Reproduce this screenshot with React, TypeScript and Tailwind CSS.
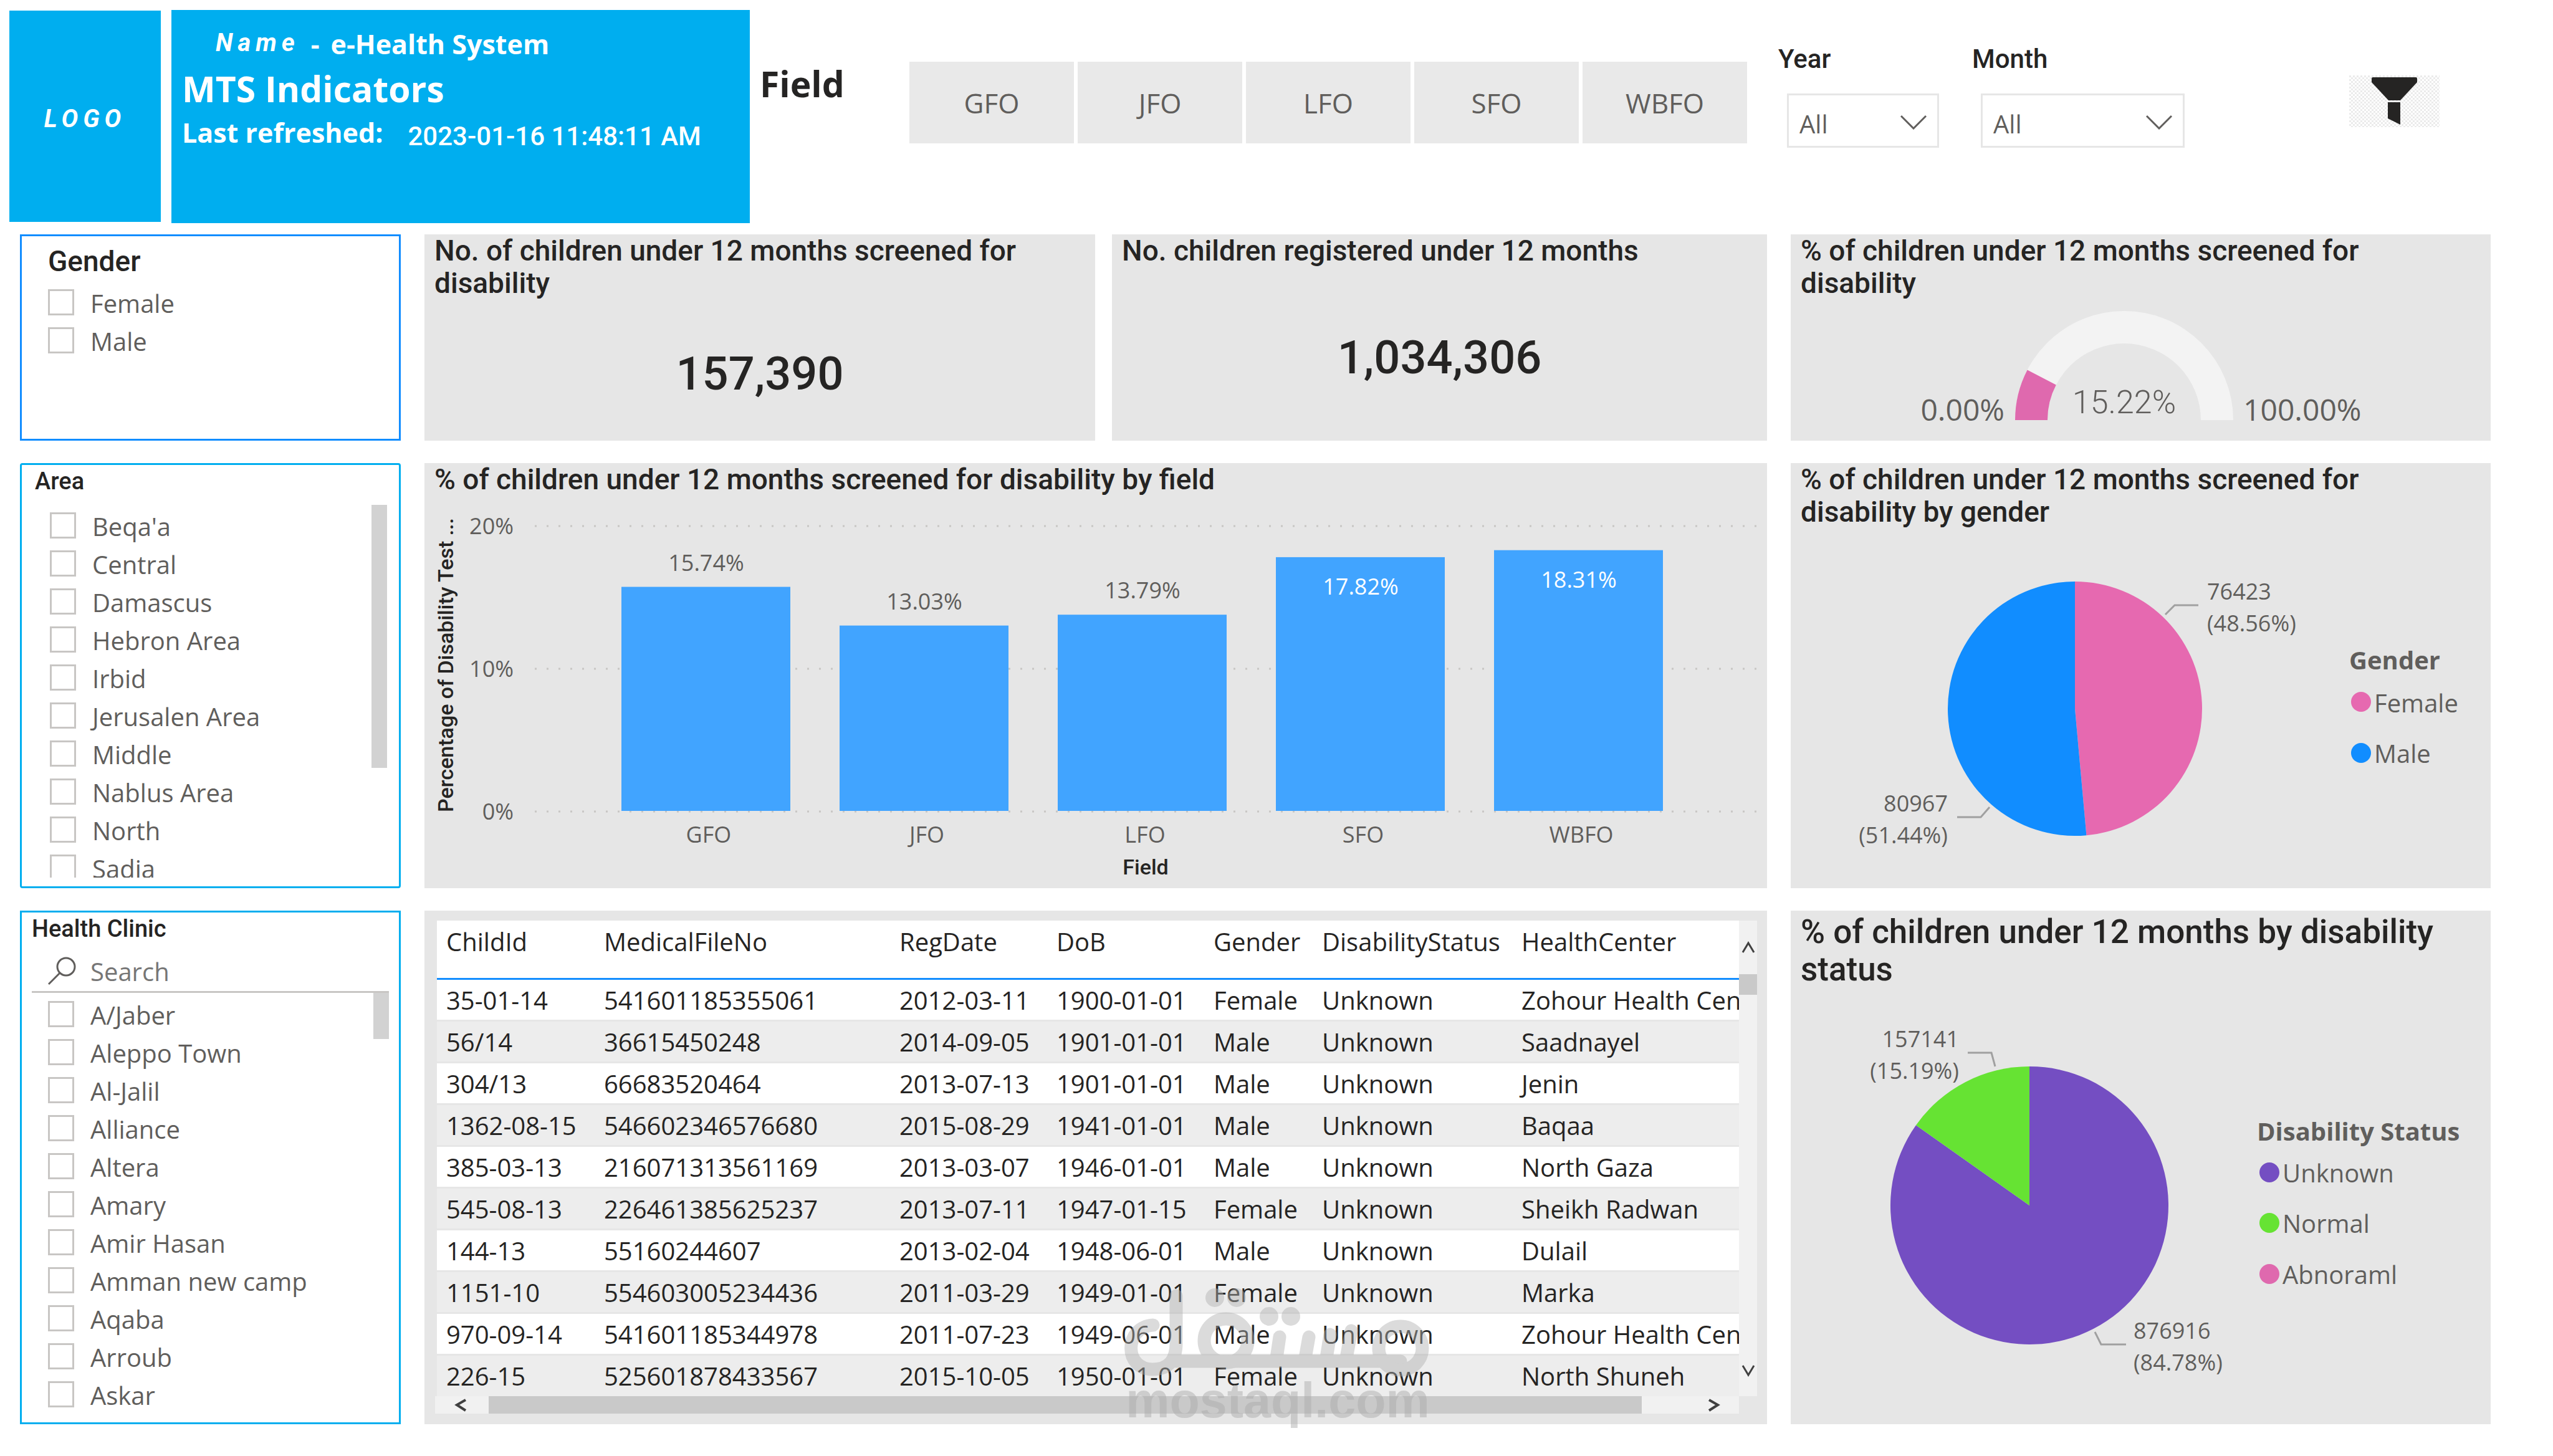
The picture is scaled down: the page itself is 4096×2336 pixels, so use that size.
import { useState } from "react";
import clsx from "clsx";

const fields = ["GFO", "JFO", "LFO", "SFO", "WBFO"];

const genders = ["Female", "Male"];

const areas = [
  "Beqa'a",
  "Central",
  "Damascus",
  "Hebron Area",
  "Irbid",
  "Jerusalen Area",
  "Middle",
  "Nablus Area",
  "North",
  "Sadia",
];

const clinics = [
  "A/Jaber",
  "Aleppo Town",
  "Al-Jalil",
  "Alliance",
  "Altera",
  "Amary",
  "Amir Hasan",
  "Amman new camp",
  "Aqaba",
  "Arroub",
  "Askar",
];

const columns = [
  { name: "ChildId", width: "w-[253px]" },
  { name: "MedicalFileNo", width: "w-[474px]" },
  { name: "RegDate", width: "w-[252px]" },
  { name: "DoB", width: "w-[252px]" },
  { name: "Gender", width: "w-[174px]" },
  { name: "DisabilityStatus", width: "w-[320px]" },
  { name: "HealthCenter", width: "" },
];

const rows = [
  ["35-01-14", "541601185355061", "2012-03-11", "1900-01-01", "Female", "Unknown", "Zohour Health Center"],
  ["56/14", "36615450248", "2014-09-05", "1901-01-01", "Male", "Unknown", "Saadnayel"],
  ["304/13", "66683520464", "2013-07-13", "1901-01-01", "Male", "Unknown", "Jenin"],
  ["1362-08-15", "546602346576680", "2015-08-29", "1941-01-01", "Male", "Unknown", "Baqaa"],
  ["385-03-13", "216071313561169", "2013-03-07", "1946-01-01", "Male", "Unknown", "North Gaza"],
  ["545-08-13", "226461385625237", "2013-07-11", "1947-01-15", "Female", "Unknown", "Sheikh Radwan"],
  ["144-13", "55160244607", "2013-02-04", "1948-06-01", "Male", "Unknown", "Dulail"],
  ["1151-10", "554603005234436", "2011-03-29", "1949-01-01", "Female", "Unknown", "Marka"],
  ["970-09-14", "541601185344978", "2011-07-23", "1949-06-01", "Male", "Unknown", "Zohour Health Center"],
  ["226-15", "525601878433567", "2015-10-05", "1950-01-01", "Female", "Unknown", "North Shuneh"],
];

const bars = [
  { field: "GFO", value: 15.74 },
  { field: "JFO", value: 13.03 },
  { field: "LFO", value: 13.79 },
  { field: "SFO", value: 17.82 },
  { field: "WBFO", value: 18.31 },
];

// Point on a circle, share 0 = twelve o'clock, clockwise
function polar(cx: number, cy: number, r: number, share: number) {
  const a = share * Math.PI * 2 - Math.PI / 2;
  return [cx + r * Math.cos(a), cy + r * Math.sin(a)];
}

function slice(cx: number, cy: number, r: number, from: number, to: number) {
  const [x1, y1] = polar(cx, cy, r, from);
  const [x2, y2] = polar(cx, cy, r, to);
  const large = to - from > 0.5 ? 1 : 0;
  return `M${cx} ${cy} L${x1} ${y1} A${r} ${r} 0 ${large} 1 ${x2} ${y2} Z`;
}

// Half ring opening downwards, share 0 = left end, 1 = right end
function ring(cx: number, cy: number, outer: number, inner: number, share: number) {
  const [x1, y1] = polar(cx, cy, outer, share / 2 - 0.25);
  const [x2, y2] = polar(cx, cy, inner, share / 2 - 0.25);
  return `M${cx - outer} ${cy} A${outer} ${outer} 0 0 1 ${x1} ${y1} L${x2} ${y2} A${inner} ${inner} 0 0 0 ${cx - inner} ${cy} Z`;
}

function CheckRow({ label, group }: { label: string; group: string }) {
  const id = `${group}-${label.replace(/\W+/g, "-")}`;
  return (
    <li className="flex h-[61px] shrink-0 items-center gap-[26px]">
      <input
        id={id}
        type="checkbox"
        className="h-[42px] w-[42px] shrink-0 appearance-none border-[3px] border-[#c8c6c4] bg-white checked:bg-[#605e5c]"
      />
      <label htmlFor={id} className="pt-1 text-[40px] leading-[52px] whitespace-nowrap text-[#605e5c]">
        {label}
      </label>
    </li>
  );
}

function Dropdown({ label, boxClass }: { label: string; boxClass: string }) {
  const id = label.toLowerCase();
  return (
    <div className="shrink-0 pt-[69px]">
      <label htmlFor={id} className="block font-['Roboto',sans-serif] text-[42px] leading-[52px] font-medium text-[#252423]">
        {label}
      </label>
      <div className={clsx("relative mt-[29px] ml-[14px] h-[87px]", boxClass)}>
        <select
          id={id}
          className="h-full w-full appearance-none border-[3px] border-[#e6e6e6] bg-white pt-2.5 pl-[17px] text-[40px] text-[#605e5c]"
        >
          <option>All</option>
        </select>
        <svg viewBox="0 0 42 24" className="pointer-events-none absolute top-[34px] right-[20px] h-[24px] w-[42px]">
          <path d="M1 2 L21 22 L41 2" fill="none" stroke="#605e5c" strokeWidth="3" />
        </svg>
      </div>
    </div>
  );
}

function CardTitle({ children }: { children: React.ReactNode }) {
  return (
    <h2 className="px-[16px] font-['Roboto',sans-serif] text-[46px] leading-[52px] font-medium text-[#252423]">
      {children}
    </h2>
  );
}

function Kpi({ title, value, className }: { title: React.ReactNode; value: string; className: string }) {
  return (
    <section className={clsx("flex min-w-0 flex-col bg-[#e6e6e6]", className)}>
      <CardTitle>{title}</CardTitle>
      <p className="flex flex-1 items-center justify-center pt-3 font-['Roboto',sans-serif] text-[74px] leading-[84px] font-medium text-[#252423]">
        {value}
      </p>
    </section>
  );
}

function Gauge() {
  return (
    <svg viewBox="0 0 1123 227" className="min-h-0 w-full flex-1">
      <path d={ring(535, 194, 175, 123, 1)} fill="#f3f3f3" />
      <path d={ring(535, 194, 175, 123, 0.1522)} fill="#df69ae" />
      <g fill="#605e5c">
        <text x="343" y="195" textAnchor="end" className="text-[48px]">0.00%</text>
        <text x="726" y="195" className="text-[48px]">100.00%</text>
        <text x="535" y="183" textAnchor="middle" className="font-['Roboto',sans-serif] text-[52px] font-light">
          15.22%
        </text>
      </g>
    </svg>
  );
}

function BarChart() {
  const base = 507;
  const perPoint = 22.9;
  return (
    <svg viewBox="0 0 2154 630" className="min-h-0 w-full flex-1 text-[36px]">
      {[0, 10, 20].map((tick) => (
        <g key={tick}>
          <line
            x1="177"
            x2="2140"
            y1={base - tick * perPoint}
            y2={base - tick * perPoint}
            stroke="#c8c6c4"
            strokeWidth="3"
            strokeDasharray="3 16"
          />
          <text x="143" y={base - tick * perPoint + 13} textAnchor="end" fill="#605e5c">
            {tick}%
          </text>
        </g>
      ))}
      {bars.map((bar, i) => {
        const x = 316 + i * 350;
        const top = base - bar.value * perPoint;
        const inside = bar.value > 15.8;
        return (
          <g key={bar.field}>
            <rect x={x} y={top} width="271" height={base - top - 1} fill="#41a4ff" />
            <text
              x={x + 136}
              y={inside ? top + 60 : top - 26}
              textAnchor="middle"
              fill={inside ? "#ffffff" : "#605e5c"}
            >
              {bar.value.toFixed(2)}%
            </text>
            <text x={x + 140} y="557" textAnchor="middle" fill="#605e5c">
              {bar.field}
            </text>
          </g>
        );
      })}
      <g fill="#252423" className="font-['Roboto',sans-serif] text-[34px] font-medium">
        <text x="1157" y="608" textAnchor="middle">Field</text>
        <text transform="translate(46 508) rotate(-90)">Percentage of Disability Test ...</text>
      </g>
    </svg>
  );
}

function GenderPie() {
  return (
    <svg viewBox="0 0 1123 578" className="min-h-0 w-full flex-1">
      <path d={slice(456, 290, 204, 0, 0.4856)} fill="#e669b0" />
      <path d={slice(456, 290, 204, 0.4856, 1)} fill="#118dff" />
      <g fill="none" stroke="#a0a0a0" strokeWidth="3">
        <path d="M601 139 L616 124 H654" />
        <path d="M319 448 L305 464 H267" />
      </g>
      <g fill="#605e5c" className="text-[36px]">
        <text x="668" y="115">76423</text>
        <text x="668" y="166">(48.56%)</text>
        <text x="252" y="455" textAnchor="end">80967</text>
        <text x="252" y="506" textAnchor="end">(51.44%)</text>
      </g>
      <g fill="#605e5c" className="text-[40px]">
        <text x="896" y="227" className="font-bold">Gender</text>
        <circle cx="915" cy="279" r="16" fill="#e669b0" />
        <text x="936" y="296">Female</text>
        <circle cx="915" cy="361" r="16" fill="#118dff" />
        <text x="936" y="377">Male</text>
      </g>
    </svg>
  );
}

function StatusPie() {
  return (
    <svg viewBox="0 0 1123 698" className="min-h-0 w-full flex-1">
      <path d={slice(383, 348, 223, 0, 0.848)} fill="#744ec2" />
      <path d={slice(383, 348, 223, 0.848, 1)} fill="#66e333" />
      <g fill="none" stroke="#a0a0a0" strokeWidth="3">
        <path d="M284 103 H322 L328 125" />
        <path d="M488 551 L498 571 H538" />
      </g>
      <g fill="#605e5c" className="text-[36px]">
        <text x="270" y="94" textAnchor="end">157141</text>
        <text x="270" y="145" textAnchor="end">(15.19%)</text>
        <text x="550" y="562">876916</text>
        <text x="550" y="613">(84.78%)</text>
      </g>
      <g fill="#605e5c" className="text-[40px]">
        <text x="748" y="244" className="font-bold">Disability Status</text>
        <circle cx="768" cy="295" r="16" fill="#744ec2" />
        <text x="789" y="311">Unknown</text>
        <circle cx="768" cy="376" r="16" fill="#66e333" />
        <text x="789" y="392">Normal</text>
        <circle cx="768" cy="458" r="16" fill="#df69ae" />
        <text x="789" y="474">Abnoraml</text>
      </g>
    </svg>
  );
}

function ChildTable() {
  return (
    <div className="flex min-w-0 flex-1">
      <div className="min-w-0 flex-1">
        <div className="ml-[3px] overflow-hidden">
          <table className="w-full table-fixed border-collapse text-left text-[40px] leading-[52px] text-[#252423]">
            <thead>
              <tr className="h-[93px] border-b-[3px] border-[#118dff] bg-white">
                {columns.map((col) => (
                  <th key={col.name} className={clsx("pt-2 pl-[15px] align-top font-normal whitespace-nowrap", col.width)}>
                    {col.name}
                  </th>
                ))}
              </tr>
            </thead>
            <tbody>
              {rows.map((row) => (
                <tr key={row[0]} className="h-[67px] border-b-[3px] border-[#e6e6e6] bg-white last:border-b-0 even:bg-[#ededed]">
                  {row.map((cell, i) => (
                    <td key={i} className="overflow-hidden pt-0.5 pl-[15px] whitespace-nowrap">
                      {cell}
                    </td>
                  ))}
                </tr>
              ))}
            </tbody>
          </table>
        </div>
        <div className="flex h-[28px] items-center bg-[#f1f1f1]">
          <svg viewBox="0 0 86 28" className="h-[28px] w-[86px] shrink-0">
            <path d="M49 6 L35 14 L49 23" fill="none" stroke="#404040" strokeWidth="4" />
          </svg>
          <div className="h-full flex-1 bg-[#c9c9c9]" />
          <svg viewBox="0 0 156 28" className="h-[28px] w-[156px] shrink-0">
            <path d="M108 6 L122 14 L108 23" fill="none" stroke="#404040" strokeWidth="4" />
          </svg>
        </div>
      </div>
      <div className="mb-[28px] flex w-[29px] flex-col items-center bg-[#f1f1f1]">
        <svg viewBox="0 0 29 86" className="h-[86px] w-[29px] shrink-0">
          <path d="M6 51 L15 36 L24 51" fill="none" stroke="#404040" strokeWidth="3" />
        </svg>
        <div className="h-[33px] w-full bg-[#c9c9c9]" />
        <svg viewBox="0 0 29 86" className="mt-auto h-[86px] w-[29px] shrink-0">
          <path d="M6 37 L15 52 L24 37" fill="none" stroke="#404040" strokeWidth="3" />
        </svg>
      </div>
    </div>
  );
}

function Watermark() {
  return (
    <div className="pointer-events-none absolute top-[602px] left-[1119px] w-[500px] opacity-45">
      <svg viewBox="0 0 500 146" className="block w-full" fill="none" stroke="#b0b0b0" strokeWidth="21" strokeLinecap="round">
        <path d="M50 63 C3 66 3 134 49 134 C76 134 87 118 87 92 V16 M87 121 H447 M253 82 L248 116 M300 82 L294 116 M334 78 L328 116 M368 72 L360 116" />
        <circle cx="167" cy="88" r="35" />
        <circle cx="447" cy="100" r="35" />
        <g fill="#b0b0b0" stroke="none">
          <circle cx="149" cy="19" r="15" />
          <circle cx="184" cy="19" r="15" />
          <circle cx="236" cy="49" r="15" />
          <circle cx="271" cy="49" r="15" />
        </g>
      </svg>
      <p className="text-center font-['Liberation_Sans',sans-serif] text-[79px] leading-[76px] font-bold text-[#a8a8a8]">
        mostaql.com
      </p>
    </div>
  );
}

export default function App() {
  const [activeField, setActiveField] = useState("");

  return (
    <div className="flex h-screen flex-col overflow-hidden bg-white pb-[51px] font-['Open_Sans',sans-serif]">
      <header className="flex h-[376px] shrink-0 items-start pr-[182px] pl-[15px]">
        <div className="mt-[17px] flex h-[339px] w-[243px] shrink-0 items-center justify-center bg-[#00aeef] pt-2">
          <span className="font-['Roboto',sans-serif] text-[40px] font-bold tracking-[0.2em] text-white italic">LOGO</span>
        </div>
        <div className="mt-[16px] ml-[17px] flex h-[342px] w-[928px] shrink-0 flex-col gap-[5px] bg-[#00aeef] pt-[27px] pl-[17px] font-bold text-white">
          <div className="flex items-start pl-[54px] text-[43px] leading-[56px]">
            <span className="font-['Roboto',sans-serif] text-[40px] leading-[52px] tracking-[0.2em] italic">Name</span>
            <span className="px-[18px]">-</span>
            <span>e-Health System</span>
          </div>
          <h1 className="text-[57px] leading-[76px]">MTS Indicators</h1>
          <div className="flex items-start gap-[40px] text-[43px] leading-[56px]">
            <span>Last refreshed:</span>
            <span className="pt-1.5 font-['Roboto',sans-serif] text-[42px] font-medium">2023-01-16 11:48:11 AM</span>
          </div>
        </div>
        <h2 className="mt-[104px] ml-[16px] w-[240px] shrink-0 text-[57px] leading-[60px] font-bold text-[#252423]">Field</h2>
        <div className="mt-[99px] grid min-w-0 flex-1 grid-cols-5 gap-[6px]">
          {fields.map((field) => (
            <button
              key={field}
              onClick={() => setActiveField(field === activeField ? "" : field)}
              className={clsx(
                "h-[131px] text-[44px]",
                field === activeField ? "bg-[#605e5c] text-white" : "bg-[#e9e9e9] text-[#605e5c]"
              )}
            >
              {field}
            </button>
          ))}
        </div>
        <div className="ml-[50px] flex shrink-0 gap-[53px]">
          <Dropdown label="Year" boxClass="w-[244px]" />
          <Dropdown label="Month" boxClass="w-[327px]" />
        </div>
        <button aria-label="Clear filters" className="mt-[121px] ml-[264px] h-[83px] w-[145px] shrink-0">
          <svg viewBox="0 0 145 83" className="h-full w-full">
            <defs>
              <pattern id="checker" width="6" height="6" patternUnits="userSpaceOnUse">
                <path d="M0 0h3v3h-3z M3 3h3v3h-3z" fill="#ebebeb" />
              </pattern>
            </defs>
            <rect width="145" height="83" fill="url(#checker)" />
            <path d="M38 3 H107 Q109 3 109 5 V11 L82 40 H63 L36 11 V5 Q36 3 38 3 Z M62 43 H82 V79 L62 69 Z" fill="#252423" />
          </svg>
        </button>
      </header>

      <main className="grid min-h-0 flex-1 grid-cols-[611fr_2154fr_1123fr] grid-rows-[331fr_682fr_824fr] gap-x-[38px] gap-y-[36px] pr-[100px] pl-[32px]">
        <section className="min-h-0 min-w-0 border-[3px] border-[#118dff] pt-[14px] pl-[42px]">
          <h2 className="font-['Roboto',sans-serif] text-[46px] leading-[52px] font-medium text-[#252423]">Gender</h2>
          <ul className="pt-[9px]">
            {genders.map((g) => (
              <CheckRow key={g} label={g} group="gender" />
            ))}
          </ul>
        </section>

        <div className="flex min-h-0 min-w-0 gap-[27px]">
          <Kpi
            className="flex-[1076]"
            title={<>No. of children under 12 months screened for<br />disability</>}
            value="157,390"
          />
          <Kpi className="flex-[1051]" title="No. children registered under 12 months" value="1,034,306" />
        </div>

        <section className="flex min-h-0 min-w-0 flex-col bg-[#e6e6e6]">
          <CardTitle>% of children under 12 months screened for<br />disability</CardTitle>
          <Gauge />
        </section>

        <section className="flex min-h-0 min-w-0 flex-col rounded-[4px] border-[3px] border-[#00aeef] pt-1 pb-[14px]">
          <h2 className="pl-[21px] font-['Roboto',sans-serif] text-[38px] leading-[44px] font-medium text-[#252423]">Area</h2>
          <div className="mt-[16px] flex min-h-0 flex-1 justify-between pr-[19px] pl-[45px]">
            <ul className="min-h-0 overflow-hidden pt-0.5">
              {areas.map((a) => (
                <CheckRow key={a} label={a} group="area" />
              ))}
            </ul>
            <div className="h-[422px] w-[25px] bg-[#d2d2d2]" />
          </div>
        </section>

        <section className="flex min-h-0 min-w-0 flex-col bg-[#e6e6e6]">
          <CardTitle>% of children under 12 months screened for disability by field</CardTitle>
          <BarChart />
        </section>

        <section className="flex min-h-0 min-w-0 flex-col bg-[#e6e6e6]">
          <CardTitle>% of children under 12 months screened for<br />disability by gender</CardTitle>
          <GenderPie />
        </section>

        <section className="flex min-h-0 min-w-0 flex-col border-[3px] border-[#00aeef] px-[16px] pt-1">
          <h2 className="font-['Roboto',sans-serif] text-[38px] leading-[44px] font-medium text-[#252423]">Health Clinic</h2>
          <div className="mt-[14px] flex h-[67px] shrink-0 items-center border-b-[3px] border-[#c8c6c4] pl-[26px]">
            <svg viewBox="0 0 46 46" className="h-[46px] w-[46px] shrink-0">
              <circle cx="29" cy="16" r="14" fill="none" stroke="#605e5c" strokeWidth="3" />
              <path d="M19 26 L1 44" stroke="#605e5c" strokeWidth="3" />
            </svg>
            <input
              type="search"
              aria-label="Search"
              placeholder="Search"
              className="ml-[22px] min-w-0 flex-1 pt-0.5 text-[40px] leading-[52px] text-[#605e5c] outline-none placeholder:text-[#767676]"
            />
          </div>
          <div className="flex min-h-0 flex-1 justify-between pl-[26px]">
            <ul className="min-h-0 overflow-hidden pt-[3px]">
              {clinics.map((c) => (
                <CheckRow key={c} label={c} group="clinic" />
              ))}
            </ul>
            <div className="h-[74px] w-[25px] bg-[#d2d2d2]" />
          </div>
        </section>

        <section className="relative flex min-h-0 min-w-0 items-start bg-[#e6e6e6] pt-[16px] pr-[16px] pl-[17px]">
          <ChildTable />
          <Watermark />
        </section>

        <section className="flex min-h-0 min-w-0 flex-col bg-[#e6e6e6] pt-1">
          <h2 className="px-[16px] font-['Roboto',sans-serif] text-[53px] leading-[60px] font-medium text-[#252423]">
            % of children under 12 months by disability<br />status
          </h2>
          <StatusPie />
        </section>
      </main>
    </div>
  );
}
